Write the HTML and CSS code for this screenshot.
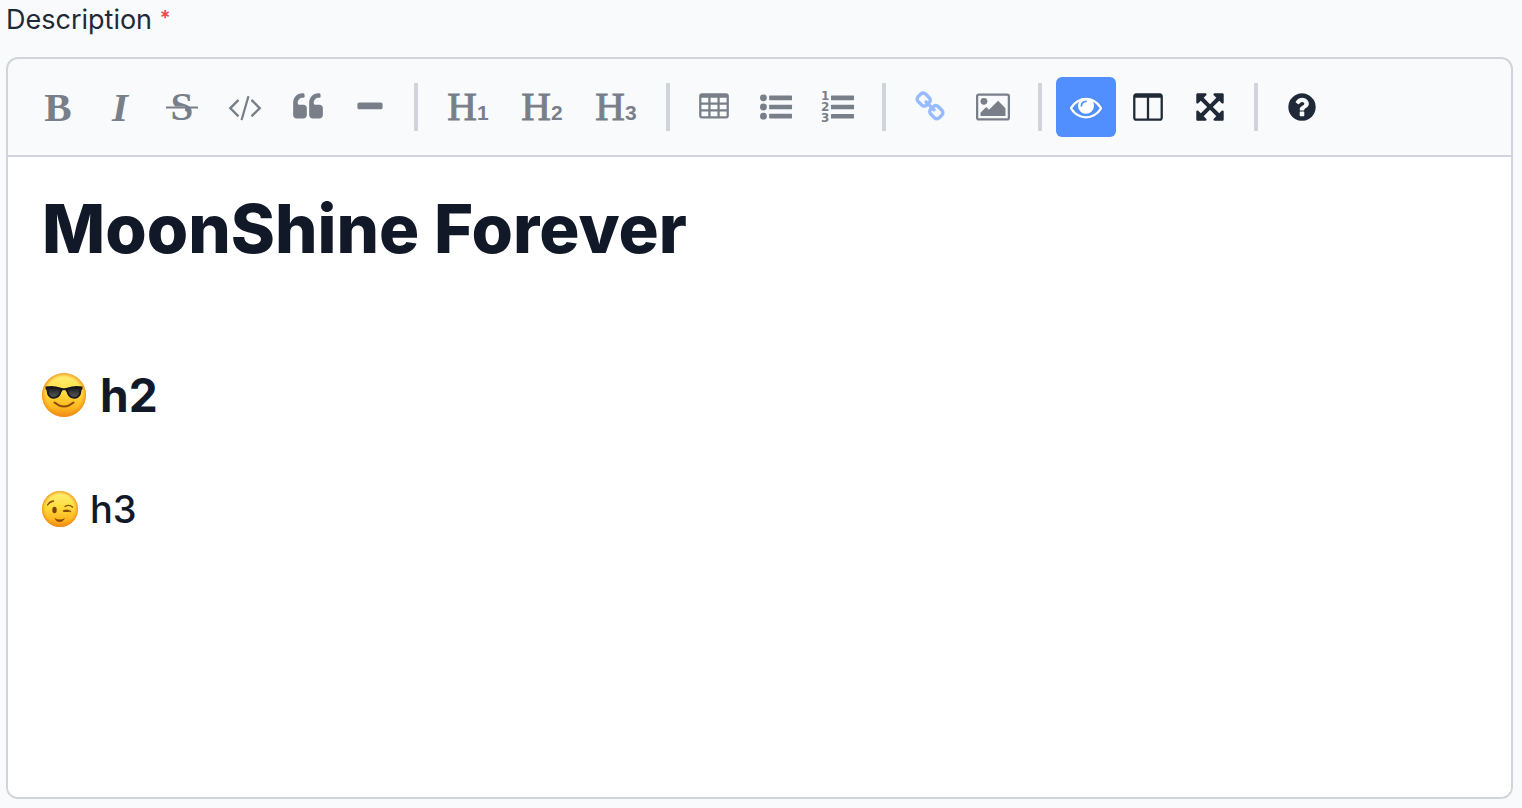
FILE: index.html
```
<!DOCTYPE html>
<html lang="en">
<head>
<meta charset="utf-8">
<title>Description</title>
<link rel="stylesheet" href="styles.css">
</head>
<body>
<main class="field">
  <h2 class="field-label" id="description-label">Description <span class="required">*</span></h2>
  <section class="editor" aria-labelledby="description-label">
    <div class="toolbar" role="toolbar" aria-label="Formatting">
      <button class="tool muted letter bold" type="button" title="Bold">B</button>
      <button class="tool muted letter italic" type="button" title="Italic">I</button>
      <button class="tool muted" type="button" title="Strikethrough">
        <svg class="icon" viewBox="0 0 32 32"><text class="strike-letter" x="16" y="29" text-anchor="middle">S</text><path class="strike-gap" d="M3 17.500H19" /><path class="strike-line" d="M0 16.500H32"/></svg>
      </button>
      <button class="tool wide muted" type="button" title="Code">
        <svg class="icon icon-wide" viewBox="0 0 1920 1792"><path d="M617 1399l-50 50q-10 10-23 10t-23-10l-466-466q-10-10-10-23t10-23l466-466q10-10 23-10t23 10l50 50q10 10 10 23t-10 23l-393 393 393 393q10 10 10 23t-10 23zm591-1067l-373 1291q-4 13-15.500 19.500t-23.500 2.500l-62-17q-13-4-19.500-15.500t-2.500-24.500l373-1291q4-13 15.500-19.500t23.500-2.500l62 17q13 4 19.500 15.500t2.500 24.500zm657 651l-466 466q-10 10-23 10t-23-10l-50-50q-10-10-10-23t10-23l393-393-393-393q-10-10-10-23t10-23l50-50q10-10 23-10t23 10l466 466q10 10 10 23t-10 23z"/></svg>
      </button>
      <button class="tool muted" type="button" title="Quote">
        <svg class="icon" viewBox="0 0 1792 1792"><path d="M832 960v384q0 80-56 136t-136 56h-384q-80 0-136-56t-56-136v-704q0-104 40.500-198.500t109.500-163.500 163.500-109.500 198.500-40.500h64q26 0 45 19t19 45v128q0 26-19 45t-45 19h-64q-106 0-181 75t-75 181v32q0 40 28 68t68 28h224q80 0 136 56t56 136zm896 0v384q0 80-56 136t-136 56h-384q-80 0-136-56t-56-136v-704q0-104 40.500-198.500t109.500-163.500 163.500-109.500 198.500-40.500h64q26 0 45 19t19 45v128q0 26-19 45t-45 19h-64q-106 0-181 75t-75 181v32q0 40 28 68t68 28h224q80 0 136 56t56 136z"/></svg>
      </button>
      <button class="tool muted" type="button" title="Insert horizontal line">
        <svg class="icon" viewBox="0 0 1792 1792"><path d="M1600 736v192q0 40-28 68t-68 28h-1216q-40 0-68-28t-28-68v-192q0-40 28-68t68-28h1216q40 0 68 28t28 68z"/></svg>
      </button>
      <span class="separator"></span>
      <button class="tool heading muted letter" type="button" title="Big heading">H<span class="level">1</span></button>
      <button class="tool heading muted letter" type="button" title="Medium heading">H<span class="level">2</span></button>
      <button class="tool heading muted letter" type="button" title="Small heading">H<span class="level">3</span></button>
      <span class="separator"></span>
      <button class="tool muted" type="button" title="Insert table">
        <svg class="icon" viewBox="-64 0 1792 1792"><path fill-rule="evenodd" d="M160 128h1344a160 160 0 0 1 160 160v1088a160 160 0 0 1-160 160h-1344a160 160 0 0 1-160-160v-1088a160 160 0 0 1 160-160zM128 384v256h384v-256zM640 384v256h384v-256zM1152 384v256h384v-256zM128 768v256h384v-256zM640 768v256h384v-256zM1152 768v256h384v-256zM128 1152v256h384v-256zM640 1152v256h384v-256zM1152 1152v256h384v-256z"/></svg>
      </button>
      <button class="tool muted" type="button" title="Generic list">
        <svg class="icon" viewBox="0 0 1792 1792"><circle cx="192" cy="384" r="192"/><circle cx="192" cy="896" r="192"/><circle cx="192" cy="1408" r="192"/><rect x="512" y="256" width="1280" height="256" rx="32"/><rect x="512" y="768" width="1280" height="256" rx="32"/><rect x="512" y="1280" width="1280" height="256" rx="32"/></svg>
      </button>
      <button class="tool muted" type="button" title="Numbered list">
        <svg class="icon" viewBox="0 0 32 32"><g class="list-number"><text x="-1" y="9">1</text><text x="-1" y="20">2</text><text x="-1" y="31">3</text></g><rect x="9" y="4.600" width="23" height="4.600" rx=".6"/><rect x="9" y="13.700" width="23" height="4.600" rx=".6"/><rect x="9" y="22.900" width="23" height="4.600" rx=".6"/></svg>
      </button>
      <span class="separator"></span>
      <button class="tool link" type="button" title="Create link">
        <svg class="icon" viewBox="0 0 1792 1792"><path d="M1520 1216q0-40-28-68l-208-208q-28-28-68-28-42 0-72 32 3 3 19 18.500t21.500 21.500 15 19 13 25.500 3.500 27.500q0 40-28 68t-68 28q-15 0-27.500-3.500t-25.500-13-19-15-21.500-21.500-18.500-19q-33 31-33 73 0 40 28 68l206 207q27 27 68 27 40 0 68-26l147-146q28-28 28-67zm-703-705q0-40-28-68l-206-207q-28-28-68-28-39 0-68 27l-147 146q-28 28-28 67 0 40 28 68l208 208q27 27 68 27 42 0 72-31-3-3-19-18.500t-21.500-21.500-15-19-13-25.500-3.500-27.500q0-40 28-68t68-28q15 0 27.500 3.500t25.500 13 19 15 21.500 21.500 18.500 19q33-31 33-73zm895 705q0 120-85 203l-147 146q-83 83-203 83-121 0-204-85l-206-207q-83-83-83-203 0-123 88-209l-88-88q-86 88-208 88-120 0-204-84l-208-208q-84-84-84-204t85-203l147-146q83-83 203-83 121 0 204 85l206 207q83 83 83 203 0 123-88 209l88 88q86-88 208-88 120 0 204 84l208 208q84 84 84 204z"/></svg>
      </button>
      <button class="tool wide muted" type="button" title="Insert image">
        <svg class="icon icon-wide" viewBox="0 0 1920 1792"><path fill-rule="evenodd" d="M160 128h1600a160 160 0 0 1 160 160v1216a160 160 0 0 1-160 160h-1600a160 160 0 0 1-160-160v-1216a160 160 0 0 1 160-160zM160 256a32 32 0 0 0-32 32v1216a32 32 0 0 0 32 32h1600a32 32 0 0 0 32-32v-1216a32 32 0 0 0-32-32z"/><circle cx="448" cy="576" r="192"/><path d="M1664 960v448h-1408v-192l320-320 160 160 512-512z"/></svg>
      </button>
      <span class="separator"></span>
      <button class="tool active" type="button" title="Toggle preview" aria-pressed="true">
        <svg class="icon" viewBox="0 0 1792 1792"><path d="M1664 960q-152-236-381-353 61 104 61 225 0 185-131.500 316.500t-316.500 131.500-316.500-131.500-131.500-316.500q0-121 61-225-229 117-381 353 133 205 333.500 326.500t434.500 121.500 434.500-121.500 333.500-326.500zm-720-384q0-20-14-34t-34-14q-125 0-214.500 89.500t-89.500 214.500q0 20 14 34t34 14 34-14 14-34q0-86 61-147t147-61q20 0 34-14t14-34zm848 384q0 34-20 69-140 230-376.500 368.500t-499.500 138.500-499.500-139-376.500-368q-20-35-20-69t20-69q140-229 376.500-368t499.500-139 499.500 139 376.500 368q20 35 20 69z"/></svg>
      </button>
      <button class="tool" type="button" title="Toggle side by side">
        <svg class="icon" viewBox="-64 0 1792 1792"><path d="M160 1536h608v-1152h-640v1120q0 13 9.500 22.500t22.500 9.500zm1376-32v-1120h-640v1152h608q13 0 22.500-9.500t9.500-22.500zm128-1216v1216q0 66-47 113t-113 47h-1344q-66 0-113-47t-47-113v-1216q0-66 47-113t113-47h1344q66 0 113 47t47 113z"/></svg>
      </button>
      <button class="tool" type="button" title="Toggle fullscreen">
        <svg class="icon" viewBox="0 0 1792 1792"><path d="M1411 541l-355 355 355 355 144-144q29-31 70-14 39 17 39 59v448q0 26-19 45t-45 19h-448q-42 0-59-40-17-39 14-69l144-144-355-355-355 355 144 144q31 30 14 69-17 40-59 40h-448q-26 0-45-19t-19-45v-448q0-42 40-59 39-17 69 14l144 144 355-355-355-355-144 144q-19 19-45 19-12 0-24-5-40-17-40-59v-448q0-26 19-45t45-19h448q42 0 59 40 17 39-14 69l-144 144 355 355 355-355-144-144q-31-30-14-69 17-40 59-40h448q26 0 45 19t19 45v448q0 42-39 59-13 5-25 5-26 0-45-19z"/></svg>
      </button>
      <span class="separator"></span>
      <button class="tool" type="button" title="Markdown guide">
        <svg class="icon" viewBox="0 0 1792 1792"><path d="M1024 1376v-192q0-14-9-23t-23-9h-192q-14 0-23 9t-9 23v192q0 14 9 23t23 9h192q14 0 23-9t9-23zm256-672q0-88-55.500-163t-138.500-116-170-41q-243 0-371 213-15 24 8 42l132 100q7 6 19 6 16 0 25-12 53-68 86-92 34-24 86-24 48 0 85.500 26t37.500 59q0 38-20 61t-68 45q-63 28-115.500 86.500t-52.500 125.500v36q0 14 9 23t23 9h192q14 0 23-9t9-23q0-19 21.500-49.500t54.500-49.500q32-18 49-28.500t46-35 44.500-48 28-60.500 12.500-81zm384 192q0 209-103 385.500t-279.500 279.500-385.500 103-385.500-103-279.500-279.500-103-385.500 103-385.500 279.500-279.500 385.500-103 385.500 103 279.500 279.500 103 385.500z"/></svg>
      </button>
    </div>
    <article class="preview">
      <h1 class="title">MoonShine Forever</h1>
      <h2 class="subtitle">
        <svg class="emoji" viewBox="0 0 44 44" role="img" aria-label="Smiling face with sunglasses">
          <defs>
            <linearGradient id="face" x1="0" y1="0" x2="0" y2="1"><stop offset="0" stop-color="#fff27a"/><stop offset=".45" stop-color="#ffdc3c"/><stop offset=".8" stop-color="#fdb41f"/><stop offset="1" stop-color="#f08a12"/></linearGradient>
            <radialGradient id="rim"><stop offset=".8" stop-color="#f59a18" stop-opacity="0"/><stop offset="1" stop-color="#ee8a18" stop-opacity=".8"/></radialGradient>
            <linearGradient id="lens" x1="0" y1="0" x2="0" y2="1"><stop offset="0" stop-color="#202124"/><stop offset="1" stop-color="#55575c"/></linearGradient>
          </defs>
          <circle cx="22" cy="22" r="22" fill="url(#face)"/><circle cx="22" cy="22" r="22" fill="url(#rim)"/>
          <path d="M3.500 13.500Q12 12 18 14.500Q22 16 26 14.500Q32 12 40.500 13.500V16L39.500 17Q39 25.500 33 25.700Q26.500 26 24.500 19Q24 17 22 17T19.500 19Q17.500 26 11 25.700Q5 25.500 4.500 17L3.500 16Z" fill="#17181b"/>
          <path d="M6.500 16Q12 14.500 17.800 17Q17 24 11.500 24Q6.500 24 6.500 16ZM37.500 16Q32 14.500 26.200 17Q27 24 32.500 24Q37.500 24 37.500 16Z" fill="url(#lens)"/>
          <path d="M12.500 29.500Q22 37.500 31.500 29.500" fill="none" stroke="#8b4b08" stroke-width="2" stroke-linecap="round"/>
        </svg>
        <span>h2</span>
      </h2>
      <h3 class="subheading">
        <svg class="emoji emoji-small" viewBox="0 0 36 36" role="img" aria-label="Winking face">
          <circle cx="18" cy="18" r="18" fill="url(#face)"/><circle cx="18" cy="18" r="18" fill="url(#rim)"/>
          <ellipse cx="12.500" cy="19" rx="2.200" ry="3.300" fill="#78440c"/>
          <path d="M5.500 14Q7.500 10.500 11.500 10M23 15.500Q27 13 30.500 16M21.500 20Q25.500 18 28.500 20.500M22 20.300H26.500" fill="none" stroke="#8b4b08" stroke-width="1.400" stroke-linecap="round"/>
          <path d="M12.500 27Q18 30 23 27Q21 31.200 17.500 31Q14 31 12.500 27Z" fill="#8b4b08"/>
        </svg>
        <span>h3</span>
      </h3>
    </article>
  </section>
</main>
</body>
</html>
```
FILE: styles.css
```
* {
  box-sizing: border-box;
}

body {
  margin: 0;
  background: #f9fafc;
  color: #1f2937;
  font-family: Inter, "Liberation Sans", sans-serif;
}

.field {
  display: flex;
  flex-direction: column;
  min-height: 100vh;
  padding: 0 9px 9px 6px;
}

.field-label {
  margin: 0 0 17px;
  font-size: 27px;
  font-weight: 400;
  line-height: 40px;
}

.required {
  color: #ef4444;
  font-size: 20px;
  font-weight: 600;
  line-height: 20px;
  vertical-align: 4px;
}

.editor {
  display: flex;
  flex: 1;
  flex-direction: column;
  border: 2px solid #d1d5db;
  border-radius: 12px;
  overflow: hidden;
}

.toolbar {
  display: flex;
  flex-wrap: wrap;
  gap: 2px;
  padding: 18px 20px;
  border-bottom: 2px solid #d1d5db;
}

.tool {
  display: flex;
  align-items: center;
  justify-content: center;
  width: 60px;
  height: 60px;
  padding: 0;
  border: 0;
  border-radius: 6px;
  background: transparent;
  color: #1f2937;
}

.wide {
  width: 62px;
}

.muted {
  color: #797f89;
}

.link {
  color: #96bbff;
}

.active {
  background: #518fff;
  color: #ffffff;
}

.letter {
  font-family: "Liberation Serif", serif;
  font-size: 41px;
  line-height: 58px;
}

.bold {
  font-weight: 700;
}

.italic {
  font-style: italic;
  font-weight: 700;
}

.heading {
  align-items: baseline;
  width: 72px;
  -webkit-text-stroke: 1px #797f89;
}

.level {
  font-family: "Liberation Sans", sans-serif;
  font-size: 21px;
  font-weight: 700;
  -webkit-text-stroke: 0;
}

.separator {
  width: 4px;
  height: 48px;
  margin: 6px 12px;
  background: #d1d5db;
}

.icon {
  width: 32px;
  height: 32px;
  fill: currentColor;
  overflow: visible;
}

.icon-wide {
  width: 34px;
}

.strike-letter {
  font: 700 41px "Liberation Serif", serif;
}

.strike-gap {
  stroke: #f9fafc;
  stroke-width: 4px;
}

.strike-line {
  stroke: currentColor;
  stroke-width: 2px;
}

.list-number {
  font: 700 12px "DejaVu Sans", sans-serif;
}

.preview {
  flex: 1;
  padding: 32px 34px;
  background: #ffffff;
  color: #111827;
}

.title {
  margin: 0;
  font-size: 67px;
  font-weight: 800;
  line-height: 80px;
}

.subtitle,
.subheading {
  display: flex;
  align-items: center;
  margin: 94px 0 0;
  font-size: 46px;
  font-weight: 700;
  line-height: 64px;
  gap: 14px;
}

.subheading {
  margin-top: 54px;
  font-size: 38px;
  font-weight: 500;
  line-height: 56px;
  gap: 12px;
}

.emoji {
  width: 44px;
  height: 44px;
}

.emoji-small {
  width: 36px;
  height: 36px;
}
```
